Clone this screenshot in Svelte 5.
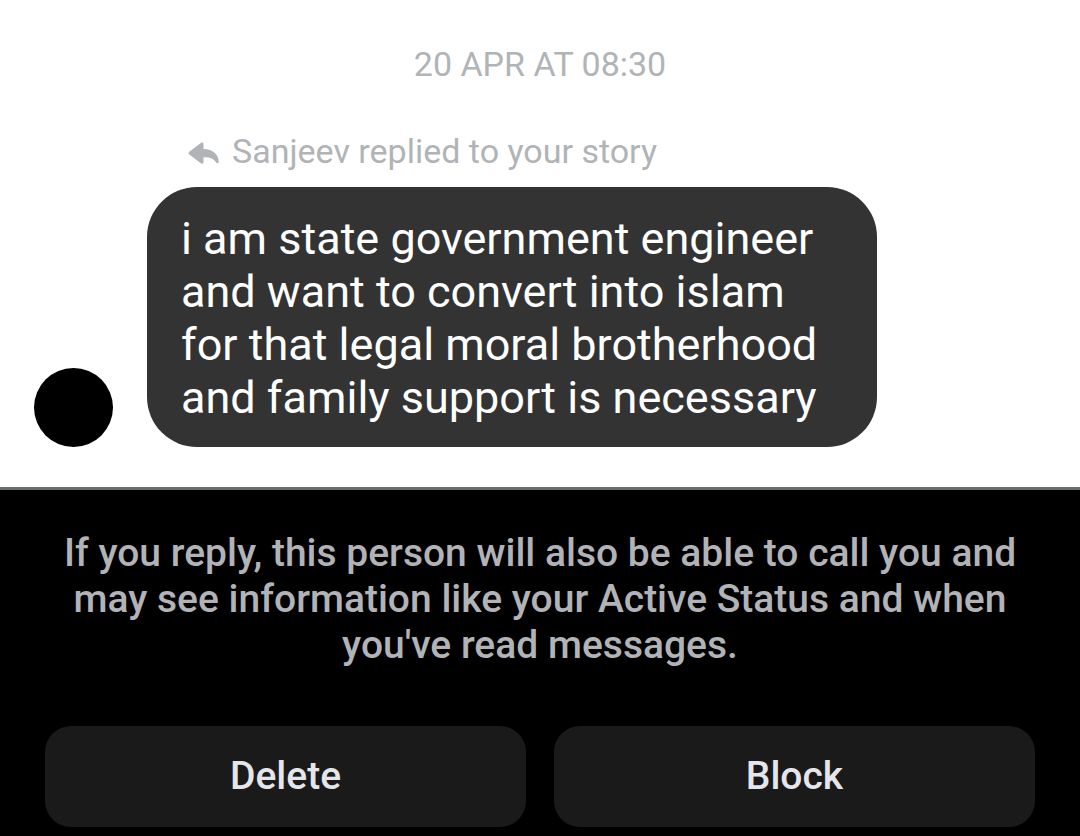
<script>
  const message = {
    date: '20 APR AT 08:30',
    context: 'Sanjeev replied to your story',
    text: 'i am state government engineer and want to convert into islam for that legal moral brotherhood and family support is necessary',
  };

  const actions = ['Delete', 'Block'];
</script>

<main>
  <section class="thread">
    <time>{message.date}</time>

    <div class="message">
      <div class="avatar"></div>
      <div class="content">
        <div class="context">
          <svg width="32" height="26" viewBox="0 0 32 26" aria-hidden="true">
            <path
              d="M15.500 6.200c0-1.600-1.500-2.300-2.700-1.300L1.300 13.800c-1 .8-1 1.800 0 2.600l11.500 8.900c1.200 1 2.700.3 2.700-1.300V19.200c6-.2 10.500 1.300 12.700 5.300.7 1.200 2.500.9 2.500-.5C30.700 16.500 25 11.200 15.500 11z"
            />
          </svg>
          <span>{message.context}</span>
        </div>
        <p class="bubble">{message.text}</p>
      </div>
    </div>
  </section>

  <section class="request">
    <p>
      If you reply, this person will also be able to call you and may see
      information like your Active Status and when you've read messages.
    </p>
    <div class="actions">
      {#each actions as action}
        <button type="button">{action}</button>
      {/each}
    </div>
  </section>
</main>

<style>
  :global(body) {
    margin: 0;
    background: #000;
  }

  main {
    font-family: Roboto, sans-serif;
  }

  .thread {
    padding: 44px 34px 40px;
    background: #fff;
    border-bottom: 3px solid #666b6d;
  }

  time {
    display: block;
    font-size: 34px;
    line-height: 40px;
    text-align: center;
    color: #b1b4b7;
  }

  .message {
    display: flex;
    align-items: flex-end;
    gap: 34px;
    margin-top: 47px;
  }

  .avatar {
    flex: none;
    width: 79px;
    height: 79px;
    border-radius: 50%;
    background: #000;
  }

  .content {
    max-width: 730px;
  }

  .context {
    display: flex;
    align-items: center;
    gap: 12px;
    padding-left: 41px;
    margin-bottom: 16px;
    font-size: 34px;
    line-height: 40px;
    color: #b1b4b7;
  }

  .context svg {
    fill: #b1b4b7;
  }

  .bubble {
    box-sizing: border-box;
    margin: 0;
    padding: 25px 34px 23px;
    border-radius: 50px;
    font-size: 45px;
    line-height: 53px;
    color: #fff;
    background: #333;
  }

  .request {
    padding: 40px 45px 9px;
    background: #000;
  }

  .request p {
    margin: 0;
    font-size: 39px;
    font-weight: 500;
    line-height: 46px;
    text-align: center;
    color: #b1b3b7;
  }

  .actions {
    display: flex;
    gap: 28px;
    margin-top: 58px;
  }

  button {
    flex: 1;
    height: 101px;
    padding: 0 0 2px;
    border: 0;
    border-radius: 26px;
    font-family: inherit;
    font-size: 39px;
    font-weight: 500;
    color: #e4e6eb;
    background: #1a1a1a;
    cursor: pointer;
  }
</style>
